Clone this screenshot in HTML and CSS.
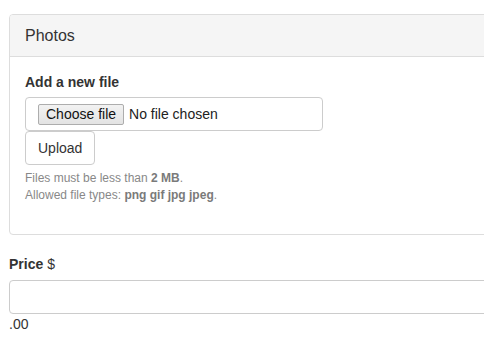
FILE: index.html
```html
<!DOCTYPE html>
<html>
<head>
<meta charset="utf-8">
<link rel="stylesheet" href="styles.css">
</head>
<body>
<div class="page">
  <div class="panel">
    <div class="panel-heading">Photos</div>
    <div class="panel-body">
      <div class="label">Add a new file</div>
      <div class="file-input">
        <span class="file-btn">Choose file</span>
        <span class="file-status">No file chosen</span>
      </div>
      <button class="btn" type="button">Upload</button>
      <div class="help">
        <div>Files must be less than <strong>2 MB</strong>.</div>
        <div>Allowed file types: <strong>png gif jpg jpeg</strong>.</div>
      </div>
    </div>
  </div>
  <div class="field">
    <div class="label label-price">Price <span class="prefix">$</span></div>
    <div class="text-input"></div>
    <div class="suffix">.00</div>
  </div>
</div>
</body>
</html>
```

FILE: styles.css
```css
html, body {
  margin: 0;
  padding: 0;
  background: #fff;
  overflow: hidden;
}
body {
  font-family: "Liberation Sans", Arial, sans-serif;
  font-size: 14px;
  line-height: 20px;
  color: #333;
}
.page {
  width: 484px;
  height: 342px;
  overflow: hidden;
  padding: 14px 0 0 9px;
  box-sizing: border-box;
}
.panel {
  width: 600px;
  border: 1px solid #ddd;
  border-radius: 4px;
  margin-bottom: 19px;
  background: #fff;
}
.panel-heading {
  height: 41px;
  padding: 0 15px;
  display: flex;
  align-items: center;
  background: #f5f5f5;
  border-bottom: 1px solid #ddd;
  border-radius: 3px 3px 0 0;
  font-size: 16px;
  color: #333;
}
.panel-body {
  padding: 15px 15px 30px;
}
.label {
  font-weight: bold;
  margin-bottom: 5px;
}
.file-input {
  width: 298px;
  height: 34px;
  box-sizing: border-box;
  border: 1px solid #ccc;
  border-radius: 4px;
  padding: 0 12px;
  display: flex;
  align-items: center;
}
.file-btn {
  height: 21px;
  box-sizing: border-box;
  padding: 0 7px;
  border: 1px solid #adadad;
  border-radius: 2px;
  background: linear-gradient(#f2f2f2, #e3e3e3);
  display: flex;
  align-items: center;
  color: #111;
  font-size: 14px;
}
.file-status {
  margin-left: 5px;
  color: #222;
}
.btn {
  display: block;
  height: 34px;
  box-sizing: border-box;
  padding: 0 12px;
  border: 1px solid #ccc;
  border-radius: 4px;
  background: #fff;
  font-family: inherit;
  font-size: 14px;
  color: #333;
}
.help {
  margin-top: 5px;
  font-size: 12px;
  line-height: 17px;
  color: #888;
}
.help strong {
  color: #7a7a7a;
}
.label-price {
  margin-bottom: 6px;
}
.prefix {
  font-weight: normal;
}
.text-input {
  width: 600px;
  height: 34px;
  box-sizing: border-box;
  border: 1px solid #ccc;
  border-radius: 4px;
}
.suffix {
  color: #333;
}
```
